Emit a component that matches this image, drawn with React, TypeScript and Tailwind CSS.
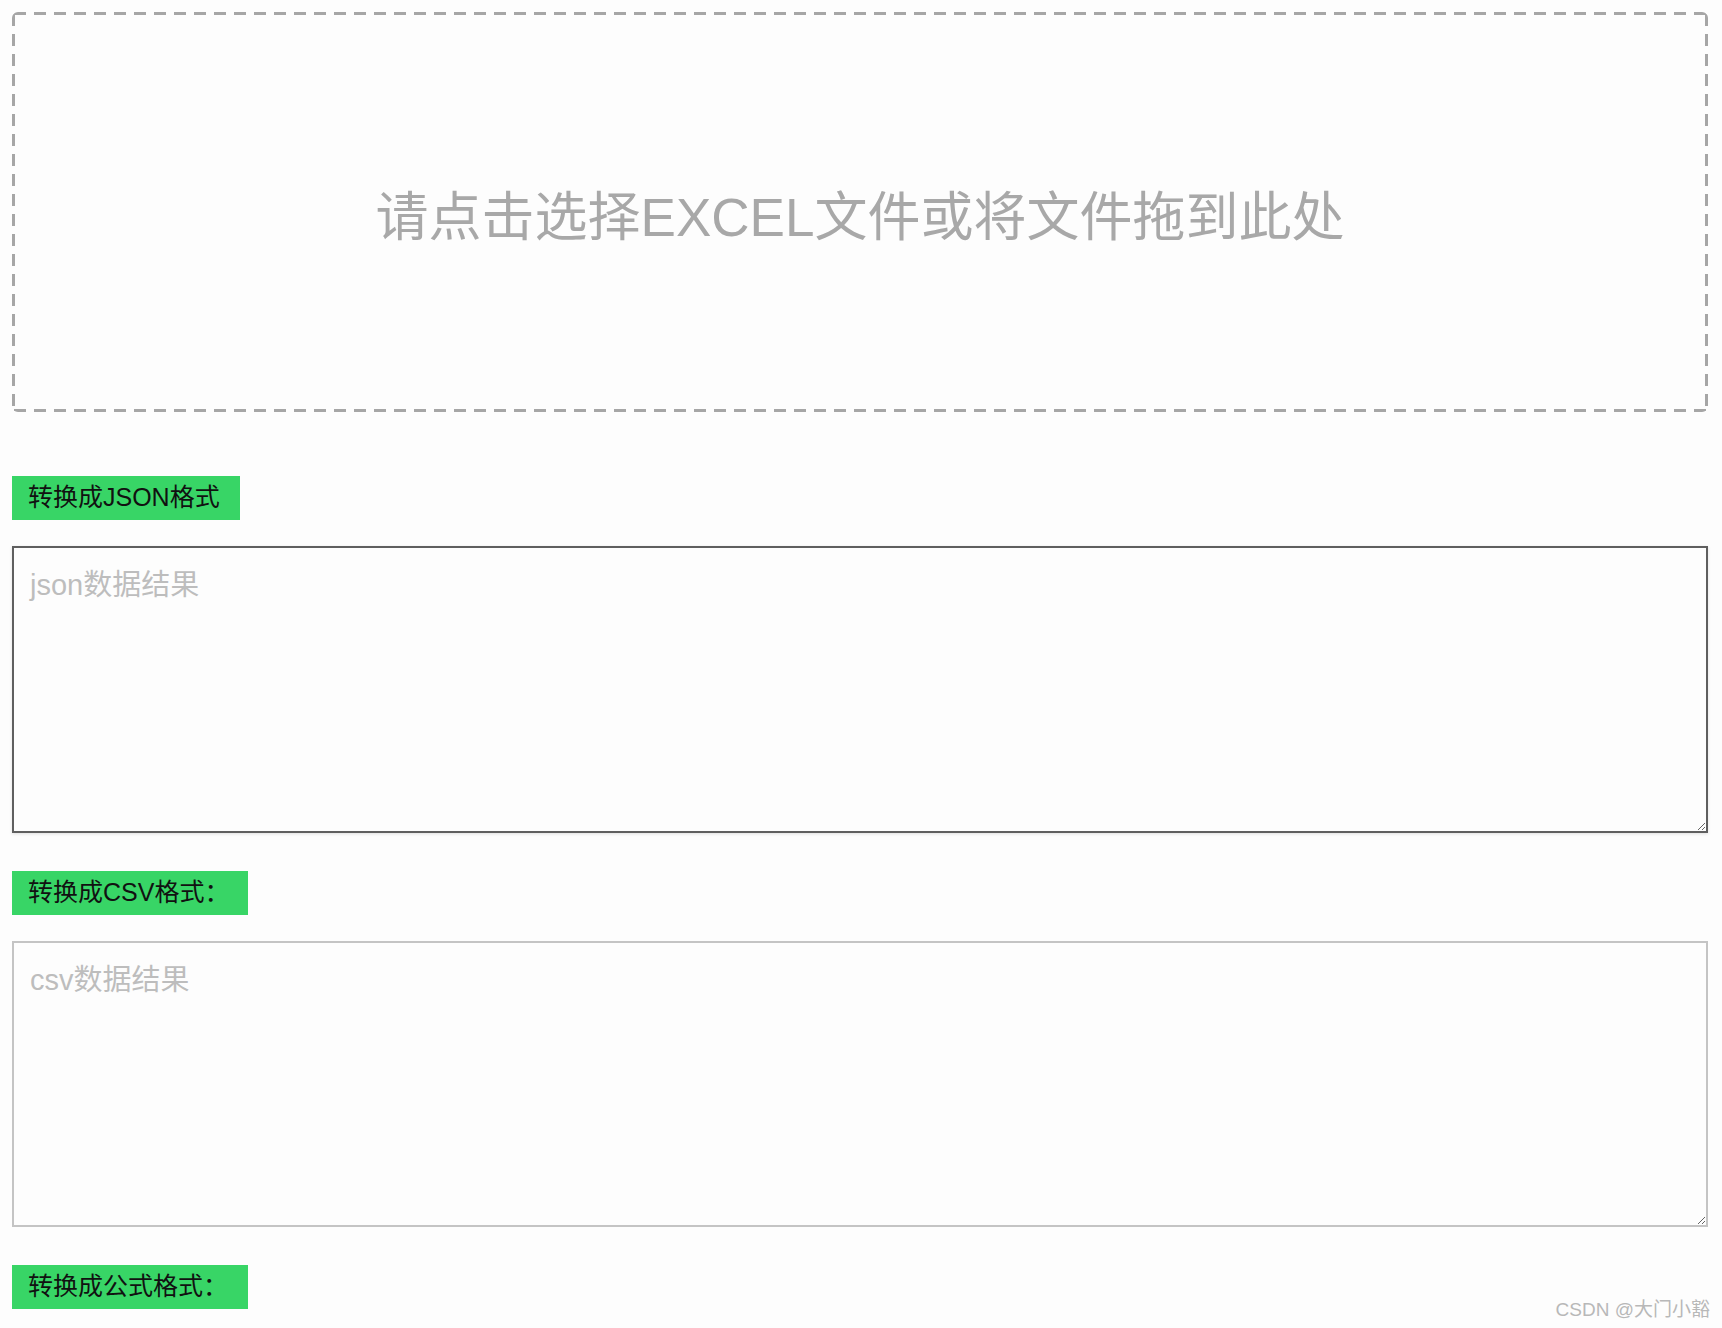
const font = { fontFamily: '"Liberation Sans", "Noto Sans CJK SC", sans-serif' }

const GreenLabel = ({ text, width }: { text: string; width: string }) => (
  <div className={`${width} h-[44px] bg-[#38d566] pl-4 flex items-center text-[25px] text-[#111]`}>{text}</div>
)

const App = () => {
  return (
    <div className="relative min-h-[1328px] bg-[#fdfdfd] px-[12px] pt-[12px]" style={font}>
      <div className="h-[400px] w-[1696px] rounded-md flex items-center justify-center [background-image:linear-gradient(90deg,#a6a6a6_12px,transparent_0),linear-gradient(90deg,#a6a6a6_12px,transparent_0),linear-gradient(180deg,#a6a6a6_12px,transparent_0),linear-gradient(180deg,#a6a6a6_12px,transparent_0)] [background-size:20px_3px,20px_3px,3px_20px,3px_20px] [background-position:2px_0,2px_100%,0_2px,100%_2px] [background-repeat:repeat-x,repeat-x,repeat-y,repeat-y]">
        <span className="text-[53px] text-[#a8a8a8] mt-[12px]">请点击选择EXCEL文件或将文件拖到此处</span>
      </div>

      <div className="mt-[64px]">
        <GreenLabel text="转换成JSON格式" width="w-[228px]" />
      </div>
      <textarea
        className="block mt-[26px] w-[1696px] h-[287px] border-2 border-[#5f5f5f] bg-[#fdfdfd] px-4 py-[16px] text-[29px] placeholder:text-[#bdbdbd] shadow-[0_1px_3px_rgba(0,0,0,0.12)] outline-none"
        placeholder="json数据结果"
      />

      <div className="mt-[38px]">
        <GreenLabel text="转换成CSV格式：" width="w-[236px]" />
      </div>
      <textarea
        className="block mt-[26px] w-[1696px] h-[286px] border-2 border-[#c4c4c4] bg-[#fdfdfd] px-4 py-[16px] text-[29px] placeholder:text-[#bdbdbd] outline-none"
        placeholder="csv数据结果"
      />

      <div className="mt-[38px]">
        <GreenLabel text="转换成公式格式：" width="w-[236px]" />
      </div>

      <div className="absolute right-[12px] bottom-[4px] text-[19px] text-[#b8b8b8] [text-shadow:0_0_2px_#fff]">
        CSDN @大门小豁
      </div>
    </div>
  )
}

export default App
